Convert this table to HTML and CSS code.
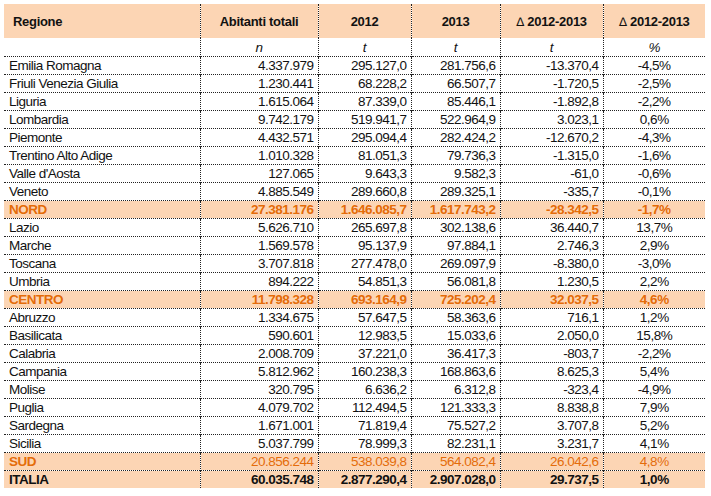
FILE: index.html
```html
<!DOCTYPE html>
<html lang="it">
<head>
<meta charset="utf-8">
<title>Regioni</title>
<link rel="stylesheet" href="styles.css">
</head>
<body>
<table class="grid">
  <colgroup>
    <col class="c1"><col class="c2"><col class="c3"><col class="c4"><col class="c5"><col class="c6">
  </colgroup>
  <thead>
    <tr class="head">
      <th class="left">Regione</th>
      <th>Abitanti totali</th>
      <th>2012</th>
      <th>2013</th>
      <th><span class="delta">&#8710;</span> 2012-2013</th>
      <th><span class="delta">&#8710;</span> 2012-2013</th>
    </tr>
  </thead>
  <tbody>
    <tr class="units"><td></td><td>n</td><td>t</td><td>t</td><td>t</td><td>%</td></tr>
    <tr><td>Emilia Romagna</td><td>4.337.979</td><td>295.127,0</td><td>281.756,6</td><td>-13.370,4</td><td>-4,5%</td></tr>
    <tr><td>Friuli Venezia Giulia</td><td>1.230.441</td><td>68.228,2</td><td>66.507,7</td><td>-1.720,5</td><td>-2,5%</td></tr>
    <tr><td>Liguria</td><td>1.615.064</td><td>87.339,0</td><td>85.446,1</td><td>-1.892,8</td><td>-2,2%</td></tr>
    <tr><td>Lombardia</td><td>9.742.179</td><td>519.941,7</td><td>522.964,9</td><td>3.023,1</td><td>0,6%</td></tr>
    <tr><td>Piemonte</td><td>4.432.571</td><td>295.094,4</td><td>282.424,2</td><td>-12.670,2</td><td>-4,3%</td></tr>
    <tr><td>Trentino Alto Adige</td><td>1.010.328</td><td>81.051,3</td><td>79.736,3</td><td>-1.315,0</td><td>-1,6%</td></tr>
    <tr><td>Valle d'Aosta</td><td>127.065</td><td>9.643,3</td><td>9.582,3</td><td>-61,0</td><td>-0,6%</td></tr>
    <tr><td>Veneto</td><td>4.885.549</td><td>289.660,8</td><td>289.325,1</td><td>-335,7</td><td>-0,1%</td></tr>
    <tr class="area"><td>NORD</td><td>27.381.176</td><td>1.646.085,7</td><td>1.617.743,2</td><td>-28.342,5</td><td>-1,7%</td></tr>
    <tr><td>Lazio</td><td>5.626.710</td><td>265.697,8</td><td>302.138,6</td><td>36.440,7</td><td>13,7%</td></tr>
    <tr><td>Marche</td><td>1.569.578</td><td>95.137,9</td><td>97.884,1</td><td>2.746,3</td><td>2,9%</td></tr>
    <tr><td>Toscana</td><td>3.707.818</td><td>277.478,0</td><td>269.097,9</td><td>-8.380,0</td><td>-3,0%</td></tr>
    <tr><td>Umbria</td><td>894.222</td><td>54.851,3</td><td>56.081,8</td><td>1.230,5</td><td>2,2%</td></tr>
    <tr class="area"><td>CENTRO</td><td>11.798.328</td><td>693.164,9</td><td>725.202,4</td><td>32.037,5</td><td>4,6%</td></tr>
    <tr><td>Abruzzo</td><td>1.334.675</td><td>57.647,5</td><td>58.363,6</td><td>716,1</td><td>1,2%</td></tr>
    <tr><td>Basilicata</td><td>590.601</td><td>12.983,5</td><td>15.033,6</td><td>2.050,0</td><td>15,8%</td></tr>
    <tr><td>Calabria</td><td>2.008.709</td><td>37.221,0</td><td>36.417,3</td><td>-803,7</td><td>-2,2%</td></tr>
    <tr><td>Campania</td><td>5.812.962</td><td>160.238,3</td><td>168.863,6</td><td>8.625,3</td><td>5,4%</td></tr>
    <tr><td>Molise</td><td>320.795</td><td>6.636,2</td><td>6.312,8</td><td>-323,4</td><td>-4,9%</td></tr>
    <tr><td>Puglia</td><td>4.079.702</td><td>112.494,5</td><td>121.333,3</td><td>8.838,8</td><td>7,9%</td></tr>
    <tr><td>Sardegna</td><td>1.671.001</td><td>71.819,4</td><td>75.527,2</td><td>3.707,8</td><td>5,2%</td></tr>
    <tr><td>Sicilia</td><td>5.037.799</td><td>78.999,3</td><td>82.231,1</td><td>3.231,7</td><td>4,1%</td></tr>
    <tr class="area light"><td>SUD</td><td>20.856.244</td><td>538.039,8</td><td>564.082,4</td><td>26.042,6</td><td>4,8%</td></tr>
    <tr class="total"><td>ITALIA</td><td>60.035.748</td><td>2.877.290,4</td><td>2.907.028,0</td><td>29.737,5</td><td>1,0%</td></tr>
  </tbody>
</table>
</body>
</html>
```

FILE: styles.css
```css
html, body {
  margin: 0;
  padding: 0;
  background: #ffffff;
}

body {
  padding: 4px 0 0 4px;
  font-family: "Liberation Sans", Arial, sans-serif;
  color: #111111;
}

.grid {
  border-collapse: collapse;
  table-layout: fixed;
  width: 701px;
  font-size: 13.5px;
  letter-spacing: -0.5px;
}

.c1 { width: 196px; }
.c2 { width: 118px; }
.c3 { width: 93px; }
.c4 { width: 89px; }
.c5 { width: 103px; }
.c6 { width: 102px; }

.grid th,
.grid td {
  padding: 0 4px 0 4px;
  border-left: 1px dotted #222222;
  white-space: nowrap;
  overflow: hidden;
}

.grid th:first-child,
.grid td:first-child {
  border-left: none;
}

.head {
  height: 34px;
  background: #fcd5b4;
}

.head th {
  font-weight: bold;
  font-size: 13px;
  letter-spacing: -0.3px;
  text-align: center;
  vertical-align: middle;
  color: #111111;
}

.head th.left {
  text-align: left;
  padding-left: 9px;
}

.delta {
  font-weight: normal;
  font-family: "DejaVu Sans", "Liberation Sans", sans-serif;
  font-size: 12px;
}

.grid tbody tr {
  height: 18px;
  border-bottom: 1px dotted #222222;
}

.grid tbody tr.total {
  border-bottom: none;
}

.grid td {
  line-height: 16px;
  vertical-align: bottom;
  text-align: right;
}

.grid td:first-child {
  text-align: left;
  padding-left: 5px;
}

.grid td:last-child {
  text-align: center;
}

.units td {
  font-style: italic;
  text-align: center;
}

.area {
  background: #fcd5b4;
}

.area td {
  color: #e46c0a;
  font-weight: bold;
}

.area.light td {
  font-weight: normal;
}

.area.light td:first-child {
  font-weight: bold;
}

.total {
  background: #fcd5b4;
}

.total td {
  font-weight: bold;
  color: #111111;
}
```
